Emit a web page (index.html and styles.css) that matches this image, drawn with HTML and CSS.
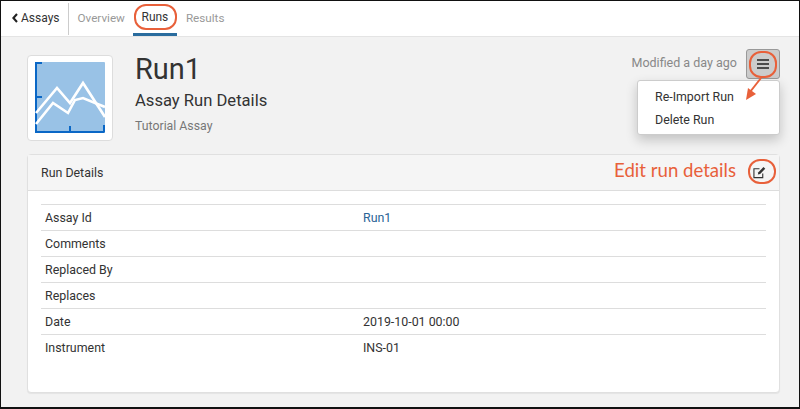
FILE: index.html
```html
<!DOCTYPE html>
<html lang="en">
<head>
<meta charset="utf-8">
<title>Run1</title>
<link rel="stylesheet" href="styles.css">
</head>
<body>
<div class="frame">
  <nav class="nav">
    <a class="back"><svg class="chev" viewBox="0 0 6 10" width="6" height="10"><path d="M5 1 1.4 5 5 9" fill="none" stroke="#222" stroke-width="2.1"/></svg>Assays</a>
    <a class="tab tab-first">Overview</a>
    <a class="tab active">Runs</a>
    <a class="tab">Results</a>
  </nav>
  <main class="content">
    <header class="head">
      <div class="logo">
        <svg viewBox="0 0 70 71" width="70" height="71">
          <rect width="70" height="71" rx="1" fill="#99c2e6"/>
          <path d="M7 1H1V70H69.5M1 35H7M35 70V64M69 70V63" fill="none" stroke="#0a67c6" stroke-width="2"/>
          <path d="M1 51 22 26 35 41 48 21 70 55" fill="none" stroke="#fff" stroke-width="2.6"/>
          <path d="M1 62 18 41 33 51 40 38 48 36 65 43 70 45" fill="none" stroke="#fff" stroke-width="2.6"/>
        </svg>
      </div>
      <div class="titles">
        <h1 class="title">Run1</h1>
        <h2 class="subtitle">Assay Run Details</h2>
        <p class="assay">Tutorial Assay</p>
      </div>
      <div class="actions">
        <span class="modified">Modified a day ago</span>
        <button class="menu-btn"><svg viewBox="0 0 12 10" width="12" height="10"><path d="M0 1H12M0 5H12M0 9H12" stroke="#222" stroke-width="1.6"/></svg></button>
      </div>
    </header>
    <section class="panel">
      <div class="panel-head">
        <span>Run Details</span>
        <span class="edit-note">Edit run details</span>
        <svg class="edit-icon" viewBox="0 0 14 14" width="13" height="13"><path d="M10.5 8v4.5H1V3H7" fill="none" stroke="#333" stroke-width="1.2"/><path d="M5.2 9.2 5.8 6.6 11.3 1.1 13.2 3 7.7 8.5Z" fill="#333"/></svg>
      </div>
      <div class="panel-body">
        <table class="details">
          <tr><td>Assay Id</td><td><a class="link">Run1</a></td></tr>
          <tr><td>Comments</td><td></td></tr>
          <tr><td>Replaced By</td><td></td></tr>
          <tr><td>Replaces</td><td></td></tr>
          <tr><td>Date</td><td>2019-10-01 00:00</td></tr>
          <tr><td>Instrument</td><td>INS-01</td></tr>
        </table>
      </div>
    </section>
    <ul class="dropdown">
      <li>Re-Import Run</li>
      <li>Delete Run</li>
    </ul>
  </main>
  <svg class="marks" viewBox="0 0 800 409" width="800" height="409">
    <rect x="135" y="5" width="41" height="24" rx="11" fill="none" stroke="#e8603a" stroke-width="2"/>
    <rect x="750" y="52" width="26" height="25" rx="11" fill="none" stroke="#e8603a" stroke-width="2"/>
    <rect x="749" y="160" width="26" height="23" rx="11" fill="none" stroke="#e8603a" stroke-width="2"/>
    <path d="M761 78 750 92" fill="none" stroke="#e8603a" stroke-width="2"/>
    <path d="M746 100 748 88 756 94Z" fill="#e8603a"/>
  </svg>
</div>
</body>
</html>
```
FILE: styles.css
```css
* { box-sizing: border-box; }
html, body { margin: 0; padding: 0; }
body { width: 800px; height: 409px; overflow: hidden; background: #fff; font-family: Roboto, "Liberation Sans", sans-serif; font-size: 12px; color: #333; }
.frame { position: relative; width: 800px; height: 409px; border: solid #111; border-width: 1px 1px 2px 1px; display: flex; flex-direction: column; overflow: hidden; }
.nav { height: 36px; flex: none; display: flex; background: #fff; border-bottom: 1px solid #e4e4e4; align-items: stretch; }
.back { display: flex; align-items: center; gap: 3px; padding: 0 8px 3px 11px; height: 32px; margin-top: 2px; border-right: 1px solid #ccc; color: #333; }
.chev { display: block; }
.tab { display: flex; align-items: center; justify-content: center; height: 35px; padding: 0 9px 2px; color: #999; font-size: 11.7px; }
.tab-first { padding-right: 8px; }
.active { color: #333; border-bottom: 3px solid #2a6c9e; padding: 0; width: 44px; margin-left: 0; font-size: 12px; }
.content { position: relative; flex: 1; background: #f2f2f2; padding: 18px 19px 14px 26px; display: flex; flex-direction: column; }
.head { display: flex; height: 99px; flex: none; }
.logo { width: 86px; height: 86px; background: #fff; border: 1px solid #ddd; border-radius: 4px; display: flex; align-items: center; justify-content: center; }
.logo svg { display: block; margin-bottom: 1px; }
.titles { margin-left: 22px; flex: 1; }
.title { margin: 0; font-size: 29px; font-weight: 400; line-height: 28px; color: #333; }
.subtitle { margin: 7px 0 0; font-size: 16.6px; font-weight: 400; line-height: 22px; color: #333; }
.assay { margin: 6px 0 0; font-size: 12.3px; line-height: 16px; color: #777; }
.actions { display: flex; align-items: flex-start; gap: 9px; margin-top: -6px; }
.modified { font-size: 12.5px; line-height: 15px; color: #888; margin-top: 6px; }
.menu-btn { width: 34px; height: 30px; padding: 0; background: #ccc; border: 1px solid #999; border-radius: 3px; display: flex; align-items: center; justify-content: center; }
.menu-btn svg { display: block; }
.panel { flex: 1; background: #fff; border: 1px solid #e0e0e0; border-radius: 4px; display: flex; flex-direction: column; box-shadow: 0 1px 1px rgba(0,0,0,.06); }
.panel-head { height: 36px; flex: none; background: #f5f5f5; border-bottom: 1px solid #ddd; display: flex; align-items: center; padding: 0 13px 0 13px; font-size: 12.4px; }
.edit-note { margin-left: auto; font-family: Lato, "Open Sans", sans-serif; font-size: 18.6px; color: #e8603a; margin-right: 17px; margin-top: -6px; }
.edit-icon { display: block; }
.panel-body { padding: 13px 13px 0; }
.details { width: 100%; border-collapse: collapse; border-top: 1px solid #ddd; table-layout: fixed; }
.details td { height: 26px; padding: 0 4px; border-bottom: 1px solid #ddd; color: #333; font-size: 12.4px; }
.details td:first-child { width: 318px; }
.details tr:last-child td { border-bottom: none; }
.link { color: #2a6496; }
.dropdown { position: absolute; left: 636px; top: 43px; width: 143px; height: 55px; margin: 0; padding: 4px 0; list-style: none; background: #fff; border: 1px solid #ccc; border-radius: 3px; box-shadow: 0 5px 12px rgba(0,0,0,.2); }
.dropdown li { height: 23px; line-height: 23px; padding-left: 17px; color: #333; font-size: 12.4px; }
.marks { position: absolute; left: -1px; top: -1px; pointer-events: none; }
```
